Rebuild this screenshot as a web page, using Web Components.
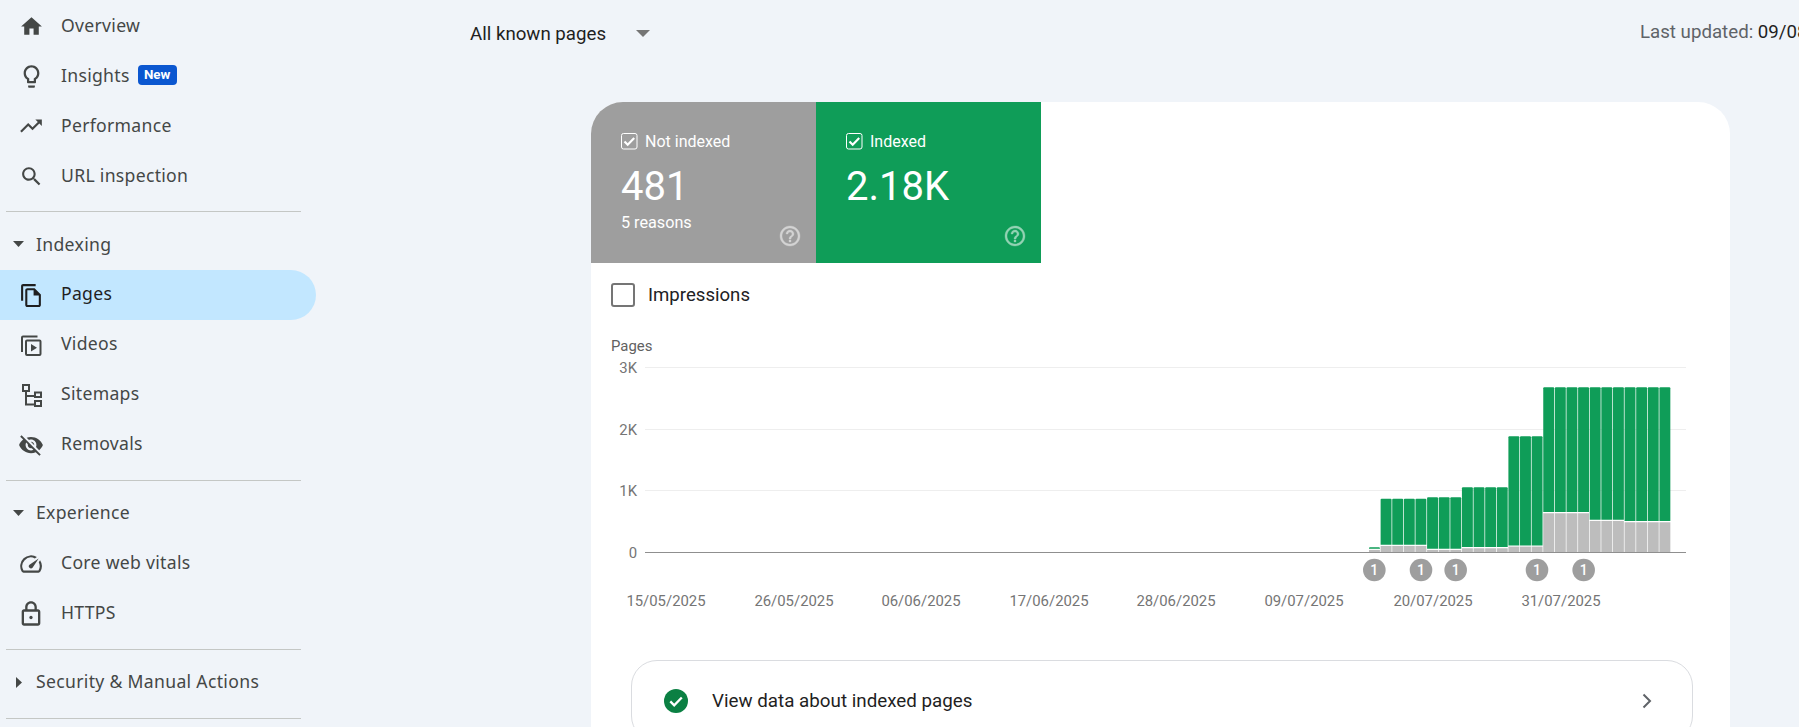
<!DOCTYPE html>
<html lang="en"><head><meta charset="utf-8"><title>Page indexing</title>
<style>
html,body{margin:0;height:727px;overflow:hidden;background:#f0f4f9}
body{font-family:Roboto,"Liberation Sans",sans-serif}
.low{--shift:-2px}
</style></head>
<body>
<gsc-app>
  <gsc-sidebar slot="side">
    <nav-item icon="home">Overview</nav-item>
    <nav-item icon="bulb" badge="New">Insights</nav-item>
    <nav-item icon="trend">Performance</nav-item>
    <nav-item icon="search">URL inspection</nav-item>
    <nav-rule></nav-rule>
    <nav-heading open>Indexing</nav-heading>
    <nav-item class="low" icon="pages" active>Pages</nav-item>
    <nav-item class="low" icon="videos">Videos</nav-item>
    <nav-item class="low" icon="sitemap">Sitemaps</nav-item>
    <nav-item class="low" icon="removals">Removals</nav-item>
    <nav-rule></nav-rule>
    <nav-heading class="low" open>Experience</nav-heading>
    <nav-item class="low" icon="vitals">Core web vitals</nav-item>
    <nav-item class="low" icon="lock">HTTPS</nav-item>
    <nav-rule></nav-rule>
    <nav-heading class="low">Security &amp; Manual Actions</nav-heading>
    <nav-rule></nav-rule>
  </gsc-sidebar>
  <gsc-topbar slot="top"></gsc-topbar>
  <gsc-card slot="card">
    <stat-tab slot="tabs" color="#9e9e9e" label="Not indexed" value="481" sub="5 reasons"></stat-tab>
    <stat-tab slot="tabs" color="#0f9d58" label="Indexed" value="2.18K"></stat-tab>
    <metric-check slot="metric">Impressions</metric-check>
    <index-chart slot="chart"></index-chart>
    <status-row slot="row">View data about indexed pages</status-row>
  </gsc-card>
</gsc-app>
<script>
const ICONS={
home:'<path d="M10 20v-6h4v6h5v-8h3L12 3 2 12h3v8z"/>',
bulb:'<path d="M9 21c0 .55.45 1 1 1h4c.55 0 1-.45 1-1v-1H9v1zm3-19C8.14 2 5 5.14 5 9c0 2.38 1.19 4.47 3 5.74V17c0 .55.45 1 1 1h6c.55 0 1-.45 1-1v-2.26c1.81-1.27 3-3.36 3-5.74 0-3.86-3.14-7-7-7zm2.85 11.1l-.85.6V16h-4v-2.3l-.85-.6C7.8 12.16 7 10.63 7 9c0-2.76 2.24-5 5-5s5 2.24 5 5c0 1.63-.8 3.16-2.15 4.1z"/>',
trend:'<path d="M16 6l2.29 2.29-4.88 4.88-4-4L2 16.59 3.41 18l6-6 4 4 6.3-6.29L22 12V6z"/>',
search:'<path d="M15.5 14h-.79l-.28-.27C15.41 12.59 16 11.11 16 9.5 16 5.91 13.09 3 9.5 3S3 5.91 3 9.5 5.91 16 9.5 16c1.61 0 3.09-.59 4.23-1.57l.27.28v.79l5 4.99L20.49 19l-4.99-5zm-6 0C7.01 14 5 11.99 5 9.5S7.01 5 9.5 5 14 7.01 14 9.5 11.99 14 9.5 14z"/>',
pages:'<path d="M16 1H4c-1.1 0-2 .9-2 2v14h2V3h12V1zm-1 4H8c-1.1 0-1.99.9-1.99 2L6 21c0 1.1.89 2 1.99 2H19c1.1 0 2-.9 2-2V11l-6-6zM8 21V7h6v5h5v9H8z"/>',
videos:'<path d="M2 4.5V19h2V4.5h14.5v-2H4a2 2 0 0 0-2 2zM8 6.5a2 2 0 0 0-2 2V21a2 2 0 0 0 2 2h12.5a2 2 0 0 0 2-2V8.5a2 2 0 0 0-2-2H8zm0 2h12.5V21H8V8.5zm4 2.5v7.5l6-3.75z"/>',
sitemap:'<path fill-rule="evenodd" d="M3 1h8v8H8v3h7V8.5h8V15h-8v-1H8v6.5h7V17h8v7h-8v-1.5H6V9H3V1zm2 2v4h4V3H5zm12 7.5V13h4v-2.5h-4zm0 8.5v3h4v-3h-4z"/>',
removals:'<path d="M12 7c2.76 0 5 2.24 5 5 0 .65-.13 1.26-.36 1.83l2.92 2.92c1.51-1.26 2.7-2.89 3.43-4.75-1.73-4.39-6-7.5-11-7.5-1.4 0-2.74.25-3.98.7l2.16 2.16C10.74 7.13 11.35 7 12 7zM2 4.27l2.28 2.28.46.46C3.08 8.3 1.78 10.02 1 12c1.73 4.39 6 7.5 11 7.5 1.55 0 3.03-.3 4.38-.84l.42.42L19.73 22 21 20.73 3.27 3 2 4.27zM7.53 9.8l1.55 1.55c-.05.21-.08.43-.08.65 0 1.66 1.34 3 3 3 .22 0 .44-.03.65-.08l1.55 1.55c-.67.33-1.41.53-2.2.53-2.76 0-5-2.24-5-5 0-.79.2-1.53.53-2.2zm4.31-.78l3.15 3.15.02-.16c0-1.66-1.34-3-3-3l-.17.01z"/>',
vitals:'<path d="M20.38 8.57l-1.23 1.85a8 8 0 0 1-.22 7.58H5.07A8 8 0 0 1 15.58 6.85l1.85-1.23A10 10 0 0 0 3.35 19a2 2 0 0 0 1.72 1h13.85a2 2 0 0 0 1.74-1 10 10 0 0 0-.27-10.44zm-9.79 6.84a2 2 0 0 0 2.83 0l5.66-8.49-8.49 5.66a2 2 0 0 0 0 2.83z"/>',
lock:'<path d="M18 8h-1V6c0-2.76-2.24-5-5-5S7 3.24 7 6v2H6c-1.1 0-2 .9-2 2v10c0 1.1.9 2 2 2h12c1.1 0 2-.9 2-2V10c0-1.1-.9-2-2-2zM9 6c0-1.66 1.34-3 3-3s3 1.34 3 3v2H9V6zm9 14H6V10h12v10z"/><circle cx="12" cy="15" r="1.4"/>',
help:'<path stroke="currentColor" stroke-width=".35" d="M11 18h2v-2h-2v2zm1-16C6.48 2 2 6.48 2 12s4.48 10 10 10 10-4.48 10-10S17.52 2 12 2zm0 18c-4.41 0-8-3.59-8-8s3.59-8 8-8 8 3.59 8 8-3.59 8-8 8zm0-14c-2.21 0-4 1.79-4 4h2c0-1.1.9-2 2-2s2 .9 2 2c0 2-3 1.75-3 5h2c0-2.25 3-2.5 3-5 0-2.21-1.79-4-4-4z"/>'
};
const SIZES={home:25,bulb:27,trend:26,search:25,pages:25,videos:24,sitemap:24,removals:26,vitals:26,lock:28};
const svgIcon=(n,s=24)=>`<svg width="${s}" height="${s}" viewBox="0 0 24 24" fill="currentColor" aria-hidden="true">${ICONS[n]}</svg>`;
const SANS='"Noto Sans",Roboto,sans-serif';

class Base extends HTMLElement{
  connectedCallback(){ if(!this.shadowRoot){ this.attachShadow({mode:'open'}).innerHTML=this.render(); } }
}
customElements.define('gsc-app',class extends Base{render(){return `<style>
:host{display:grid;grid-template-columns:316px 1483px;height:727px;overflow:hidden}
main{display:flex;flex-direction:column;min-width:0;overflow:hidden}
</style><slot name="side"></slot><main><slot name="top"></slot><slot name="card"></slot></main>`}});
customElements.define('gsc-sidebar',class extends Base{render(){return `<style>
:host{display:flex;flex-direction:column;padding-top:1px;font-family:${SANS};color:#444746}
</style><slot></slot>`}});
customElements.define('nav-item',class extends Base{render(){
 const a=this.hasAttribute('active'),b=this.getAttribute('badge'),n=this.getAttribute('icon');
 return `<style>
:host{display:flex;align-items:center;height:50px;flex:none;box-sizing:border-box;padding-left:17px;border-radius:0 25px 25px 0;
 background:${a?'#c2e7ff':'transparent'};color:${a?'#1f1f1f':'#444746'}}
.i{flex:none;width:28px;height:28px;margin-right:16px;display:flex;align-items:center;justify-content:center}
svg{display:block;flex:none}
span.l{font-size:17.6px;letter-spacing:.3px;line-height:50px;position:relative;top:var(--shift,-1px)}
b{margin-left:8px;background:#0b57d0;color:#fff;font:700 13.4px/20px Roboto,sans-serif;height:20px;width:39px;text-align:center;border-radius:4px;position:relative;top:-1px}
</style><div class="i">${svgIcon(n,SIZES[n]||24)}</div><span class="l"><slot></slot></span>${b?`<b>${b}</b>`:''}`}});
customElements.define('nav-rule',class extends Base{render(){return `<style>
:host{display:block;height:1px;background:#c4c7c5;margin:10px 0 8px 6px;width:295px;flex:none}
</style>`}});
customElements.define('nav-heading',class extends Base{render(){
 const o=this.hasAttribute('open');
 return `<style>
:host{display:flex;align-items:center;height:50px;flex:none;color:#444746}
.a{width:36px;flex:none;position:relative;top:-1px}
span.l{font-size:17.6px;letter-spacing:.32px;position:relative;top:var(--shift,-1px)}
svg{display:block}
</style><div class="a">${o?'<svg style="margin-left:13px" width="11" height="6" viewBox="0 0 11 6"><path d="M0 0h11L5.5 6z" fill="#444746"/></svg>':'<svg style="margin-left:16px" width="6" height="11" viewBox="0 0 6 11"><path d="M0 0v11l6-5.5z" fill="#444746"/></svg>'}</div><span class="l"><slot></slot></span>`}});
customElements.define('gsc-topbar',class extends Base{render(){return `<style>
:host{display:flex;align-items:center;height:102px;flex:none;box-sizing:border-box;padding:0 0 36px 154px;font-family:Roboto,sans-serif;white-space:nowrap}
.dd{display:flex;align-items:center;width:186px;flex:none;font-size:18.7px;color:#1f1f1f;margin-top:2px}
.dd svg{margin-left:30px;margin-top:-1px}
.up{margin-left:984px;flex:none;font-size:18.7px;color:#5f6368;margin-top:-2px}
.up b{font-weight:400;color:#1f1f1f}
</style><div class="dd"><span>All known pages</span><svg width="14" height="7" viewBox="0 0 14 7"><path d="M0 0h14L7 7z" fill="#757575"/></svg></div>
<div class="up">Last updated: <b>09/08/2025</b></div>`}});
customElements.define('gsc-card',class extends Base{render(){return `<style>
:host{display:flex;flex-direction:column;flex:none;margin-left:275px;width:1139px;height:700px;background:#fff;border-radius:32px 32px 0 0;overflow:hidden;font-family:Roboto,sans-serif}
.tabs{display:flex;height:161px;flex:none}
.m{height:64px;flex:none;display:flex;align-items:center;padding-left:20px}
.r{padding:16px 37px 0 40px}
</style><div class="tabs"><slot name="tabs"></slot></div><div class="m"><slot name="metric"></slot></div><slot name="chart"></slot><div class="r"><slot name="row"></slot></div>`}});
customElements.define('stat-tab',class extends Base{render(){
 const sub=this.getAttribute('sub');
 return `<style>
:host{display:block;position:relative;width:225px;height:161px;flex:none;box-sizing:border-box;padding:30px 0 0 30px;background:${this.getAttribute('color')};color:#fff}
.h{display:flex;align-items:center;font-size:16px;height:18px;gap:7px}
.c{display:block;flex:none}
.v{font-size:40px;line-height:46px;margin-top:14px}
.s{font-size:16.2px;line-height:20px;margin-top:3px}
.q{position:absolute;right:14px;bottom:15px;color:#fff;opacity:.55;width:24px;height:24px}
.q svg{display:block}
</style><div class="h"><svg class="c" width="17" height="17" viewBox="0 0 17 17"><rect x=".5" y=".5" width="15.5" height="15.5" rx="2" fill="none" stroke="#fff"/><path d="M3.5 8.5l3.2 3.2 6.5-6.7" fill="none" stroke="#fff" stroke-width="2.2"/></svg><span>${this.getAttribute('label')}</span></div>
<div class="v">${this.getAttribute('value')}</div>${sub?`<div class="s">${sub}</div>`:''}<div class="q">${svgIcon('help')}</div>`}});
customElements.define('metric-check',class extends Base{render(){return `<style>
:host{display:flex;align-items:center;color:#202124;font-size:18.6px}
i{display:block;box-sizing:border-box;width:24px;height:24px;border:2px solid #757575;border-radius:3px;margin-right:13px}
</style><i></i><span><slot></slot></span>`}});
customElements.define('index-chart',class extends Base{render(){
 const Y=[[367,'3K'],[429,'2K'],[490,'1K']];
 const zx=v=>1340+v/3, zy=v=>370+v/3;
 const runs=[[1,532,538],[4,386,526],[3,382,538],[4,352,533],[3,199,528],[4,52,428],[3,52,451],[4,52,455]];
 const w=34.85; let x=87, bars='';
 for(const [n,g,s] of runs){ for(let i=0;i<n;i++){
   const px=zx(x), pw=w/3-.7;
   bars+=`<path d="M${px} ${zy(s)-.6}V${zy(g)+1}q0-1 1-1H${px+pw-1}q1 0 1 1V${zy(s)-.6}z" fill="#0f9d58"/>`;
   bars+=`<rect x="${px}" y="${zy(s)+.6}" width="${pw}" height="${552-zy(s)-.6}" fill="#bdbdbd"/>`;
   x+=w;
 }}
 const dates=[[666,'15/05/2025'],[794,'26/05/2025'],[921,'06/06/2025'],[1049,'17/06/2025'],[1176,'28/06/2025'],[1304,'09/07/2025'],[1433,'20/07/2025'],[1561,'31/07/2025']];
 const ann=[103,243,347,591,731];
 return `<style>
:host{display:block;height:317px;flex:none}
svg{display:block;font-family:Roboto,sans-serif;font-size:14.9px}
text{fill:#757575}
</style><svg width="1139" height="317" viewBox="591 327 1139 317">
<text x="611" y="351" style="fill:#616161">Pages</text>
${Y.map(([y,l])=>`<line x1="645" x2="1686" y1="${y}.5" y2="${y}.5" stroke="#eeeeee"/><text x="637" y="${y+5.5}" text-anchor="end">${l}</text>`).join('')}
${bars}
<line x1="645" x2="1686" y1="552.5" y2="552.5" stroke="#8f8f8f"/><text x="637" y="557.5" text-anchor="end">0</text>
${ann.map(a=>`<circle cx="${zx(a)}" cy="570" r="11.3" fill="#9e9e9e"/><text x="${zx(a)}" y="575" text-anchor="middle" style="fill:#fff;font-size:14px;font-weight:500">1</text>`).join('')}
${dates.map(([x,t])=>`<text x="${x}" y="606" text-anchor="middle">${t}</text>`).join('')}
</svg>`}});
customElements.define('status-row',class extends Base{render(){return `<style>
:host{display:flex;align-items:center;box-sizing:border-box;height:82px;padding:0 39px 0 32px;border:1px solid #dadce0;border-radius:26px;color:#1f1f1f;font-size:18.8px}
.k{flex:none;margin-right:24px;display:block}
span{flex:1}
.c{flex:none;display:block}
</style><svg class="k" width="24" height="24" viewBox="0 0 24 24"><circle cx="12" cy="12" r="12" fill="#0b8043"/><path d="M6.3 12.4l3.9 3.9 7.6-7.8" fill="none" stroke="#fff" stroke-width="2.3"/></svg><span><slot></slot></span>
<svg class="c" width="12" height="16" viewBox="0 0 12 16"><path d="M2.5 1.5L9 8l-6.5 6.5" fill="none" stroke="#5f6368" stroke-width="2"/></svg>`}});
</script>
</body></html>
